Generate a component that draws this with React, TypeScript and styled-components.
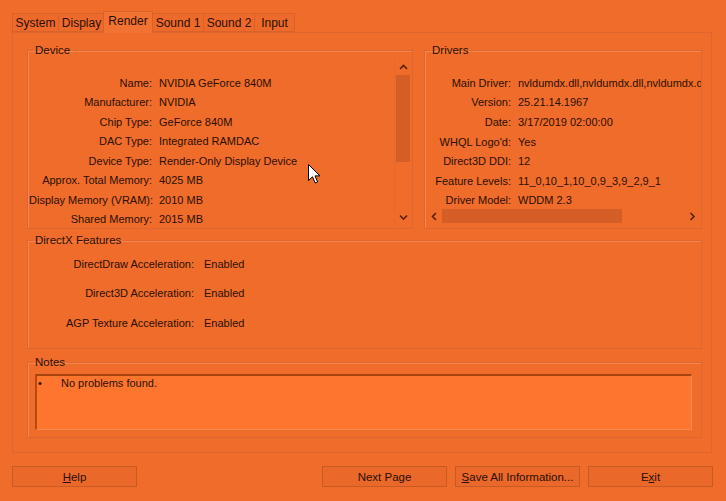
import React from "react";
import styled, { createGlobalStyle } from "styled-components";

const GlobalStyle = createGlobalStyle`
  html, body {
    margin: 0;
    padding: 0;
    background: #f06c2a;
  }
  body {
    font-family: "Liberation Sans", Arial, sans-serif;
    font-size: 11px;
    color: #2a1004;
  }
`;

const Window = styled.div`
  position: relative;
  width: 726px;
  height: 501px;
  background: #f06c2a;
  overflow: hidden;
  display: flex;
  flex-direction: column;
`;

const TabStrip = styled.div`
  display: flex;
  align-items: flex-end;
  height: 32px;
  padding-left: 12px;
  box-sizing: border-box;
`;

const Tab = styled.div<{ $w: number; $active?: boolean }>`
  width: ${({ $w }) => $w}px;
  height: ${({ $active }) => ($active ? 22 : 19)}px;
  margin: ${({ $active }) => ($active ? "0 -1px -1px" : "0")};
  box-sizing: border-box;
  border: 1px solid #d9622a;
  border-bottom: ${({ $active }) => ($active ? "none" : "1px solid #d9622a")};
  border-right: ${({ $active }) => ($active ? "1px solid #d9622a" : "none")};
  background: ${({ $active }) => ($active ? "#f27232" : "#ee6a2a")};
  display: flex;
  align-items: center;
  justify-content: center;
  font-size: 12px;
  padding-bottom: ${({ $active }) => ($active ? 3 : 0)}px;
  position: relative;
  z-index: ${({ $active }) => ($active ? 2 : 1)};
  &:last-child {
    border-right: 1px solid #d9622a;
  }
`;

const Panel = styled.div`
  margin: 0 14px 0 12px;
  height: 421px;
  box-sizing: border-box;
  border: 1px solid #de6630;
  background: #f06c2a;
  padding: 10px 9px 0 14px;
  display: flex;
  flex-direction: column;
`;

const Group = styled.fieldset<{ $h: number; $mt?: number }>`
  margin: ${({ $mt }) => $mt ?? 0}px 0 0 0;
  padding: 0;
  min-width: 0;
  height: ${({ $h }) => $h}px;
  box-sizing: border-box;
  border: 1px solid #dd6632;
  box-shadow: inset 1px 1px 0 #f5854a;
  position: relative;
  display: flex;
  flex-direction: column;
`;

const Legend = styled.legend`
  margin-left: 5px;
  padding: 0 2px;
  font-size: 11.5px;
  line-height: 14px;
`;

const TopRow = styled.div`
  display: flex;
  gap: 11px;
`;

const ListArea = styled.div`
  flex: 1;
  display: flex;
  min-height: 0;
  padding: 2px 1px 3px 1px;
`;

const InfoGrid = styled.div<{ $label: number; $gap: number; $row: number; $top: number }>`
  flex: 1;
  display: grid;
  grid-template-columns: ${({ $label }) => $label}px auto;
  column-gap: ${({ $gap }) => $gap}px;
  grid-auto-rows: ${({ $row }) => $row}px;
  align-items: center;
  padding-top: ${({ $top }) => $top}px;
  overflow: hidden;
  white-space: nowrap;
  line-height: 14px;
`;

const Label = styled.div`
  text-align: right;
`;

const Value = styled.div`
  overflow: hidden;
`;

const VScroll = styled.div`
  width: 16px;
  border-left: 1px solid #e26a31;
  display: flex;
  flex-direction: column;
  align-items: stretch;
`;

const HScroll = styled.div`
  height: 16px;
  margin: 0 1px 4px 1px;
  display: flex;
  align-items: stretch;
`;

const Arrow = styled.div`
  width: 16px;
  height: 16px;
  display: flex;
  align-items: center;
  justify-content: center;
  flex: none;
`;

const Track = styled.div<{ $vertical?: boolean }>`
  flex: 1;
  display: flex;
  flex-direction: ${({ $vertical }) => ($vertical ? "column" : "row")};
`;

const Thumb = styled.div<{ $vertical?: boolean; $size: number }>`
  background: #d45e26;
  ${({ $vertical, $size }) =>
    $vertical
      ? `height: ${$size}px; margin: 0 1px;`
      : `width: ${$size}px; margin: 1px 0;`}
`;

const FeatureGrid = styled(InfoGrid)`
  padding-left: 1px;
`;

const NotesBox = styled.div`
  margin: 5px 9px 0 7px;
  height: 56px;
  box-sizing: border-box;
  background: #fe752d;
  border-top: 2px solid #a9440f;
  border-left: 2px solid #b24a14;
  border-right: 1px solid #f08a55;
  border-bottom: 1px solid #f08a55;
  padding: 0;
  display: flex;
  align-items: flex-start;
  line-height: 14px;
`;

const Bullet = styled.span`
  width: 23px;
  padding-left: 1px;
`;

const ButtonRow = styled.div`
  display: flex;
  align-items: center;
  padding: 13px 13px 0 12px;
  gap: 8px;
`;

const Spacer = styled.div`
  flex: 1;
`;

const Button = styled.div`
  width: 125px;
  height: 21px;
  box-sizing: border-box;
  border: 1px solid #c85a24;
  background: #e9682a;
  display: flex;
  align-items: center;
  justify-content: center;
  font-size: 11.5px;
  line-height: 14px;
  u {
    text-decoration: underline;
  }
`;

const Cursor = styled.svg`
  position: absolute;
  left: 308px;
  top: 164px;
`;

const Chevron = ({ dir }: { dir: "up" | "down" | "left" | "right" }) => {
  const d = {
    up: "M1 5 L4.5 1.5 L8 5",
    down: "M1 1.5 L4.5 5 L8 1.5",
    left: "M5 1 L1.5 4.5 L5 8",
    right: "M1.5 1 L5 4.5 L1.5 8",
  }[dir];
  const vertical = dir === "up" || dir === "down";
  return (
    <svg width={vertical ? 9 : 7} height={vertical ? 7 : 9} viewBox={vertical ? "0 0 9 7" : "0 0 7 9"}>
      <path d={d} fill="none" stroke="#5a2208" strokeWidth="1.6" />
    </svg>
  );
};

const tabs = [
  { name: "System", w: 46 },
  { name: "Display", w: 46 },
  { name: "Render", w: 50, active: true },
  { name: "Sound 1", w: 51 },
  { name: "Sound 2", w: 51 },
  { name: "Input", w: 41 },
];

const device: [string, string][] = [
  ["Name:", "NVIDIA GeForce 840M"],
  ["Manufacturer:", "NVIDIA"],
  ["Chip Type:", "GeForce 840M"],
  ["DAC Type:", "Integrated RAMDAC"],
  ["Device Type:", "Render-Only Display Device"],
  ["Approx. Total Memory:", "4025 MB"],
  ["Display Memory (VRAM):", "2010 MB"],
  ["Shared Memory:", "2015 MB"],
];

const drivers: [string, string][] = [
  ["Main Driver:", "nvldumdx.dll,nvldumdx.dll,nvldumdx.dll,nvldumdx.dll"],
  ["Version:", "25.21.14.1967"],
  ["Date:", "3/17/2019 02:00:00"],
  ["WHQL Logo'd:", "Yes"],
  ["Direct3D DDI:", "12"],
  ["Feature Levels:", "11_0,10_1,10_0,9_3,9_2,9_1"],
  ["Driver Model:", "WDDM 2.3"],
];

const features: [string, string][] = [
  ["DirectDraw Acceleration:", "Enabled"],
  ["Direct3D Acceleration:", "Enabled"],
  ["AGP Texture Acceleration:", "Enabled"],
];

export default function App() {
  return (
    <Window>
      <GlobalStyle />
      <TabStrip>
        {tabs.map((t) => (
          <Tab key={t.name} $w={t.w} $active={t.active}>
            {t.name}
          </Tab>
        ))}
      </TabStrip>
      <Panel>
        <TopRow>
          <Group $h={186} style={{ width: 386 }}>
            <Legend>Device</Legend>
            <ListArea>
              <InfoGrid $label={123} $gap={7} $row={19.5} $top={14}>
                {device.map(([l, v]) => (
                  <React.Fragment key={l}>
                    <Label>{l}</Label>
                    <Value>{v}</Value>
                  </React.Fragment>
                ))}
              </InfoGrid>
              <VScroll>
                <Arrow>
                  <Chevron dir="up" />
                </Arrow>
                <Track $vertical>
                  <Thumb $vertical $size={87} />
                </Track>
                <Arrow>
                  <Chevron dir="down" />
                </Arrow>
              </VScroll>
            </ListArea>
          </Group>
          <Group $h={186} style={{ flex: 1 }}>
            <Legend>Drivers</Legend>
            <InfoGrid $label={86} $gap={7} $row={19.6} $top={16}>
              {drivers.map(([l, v]) => (
                <React.Fragment key={l}>
                  <Label>{l}</Label>
                  <Value>{v}</Value>
                </React.Fragment>
              ))}
            </InfoGrid>
            <HScroll>
              <Arrow>
                <Chevron dir="left" />
              </Arrow>
              <Track>
                <Thumb $size={180} />
              </Track>
              <Arrow>
                <Chevron dir="right" />
              </Arrow>
            </HScroll>
          </Group>
        </TopRow>
        <Group $h={116} $mt={4}>
          <Legend>DirectX Features</Legend>
          <FeatureGrid $label={165} $gap={10} $row={29.5} $top={2}>
            {features.map(([l, v]) => (
              <React.Fragment key={l}>
                <Label>{l}</Label>
                <Value>{v}</Value>
              </React.Fragment>
            ))}
          </FeatureGrid>
        </Group>
        <Group $h={83} $mt={6}>
          <Legend>Notes</Legend>
          <NotesBox>
            <Bullet>•</Bullet>
            <span>No problems found.</span>
          </NotesBox>
        </Group>
      </Panel>
      <ButtonRow>
        <Button>
          <span>
            <u>H</u>elp
          </span>
        </Button>
        <Spacer />
        <Button>Next Page</Button>
        <Button>
          <span>
            <u>S</u>ave All Information...
          </span>
        </Button>
        <Button>
          <span>
            E<u>x</u>it
          </span>
        </Button>
      </ButtonRow>
      <Cursor width="13" height="20" viewBox="0 0 13 20">
        <path
          d="M0.5 0.5 L0.5 16.5 L4.5 12.8 L7.2 19 L9.6 18 L7 11.9 L12 11.9 Z"
          fill="#ffffff"
          stroke="#000000"
          strokeWidth="1"
          strokeLinejoin="miter"
        />
      </Cursor>
    </Window>
  );
}
